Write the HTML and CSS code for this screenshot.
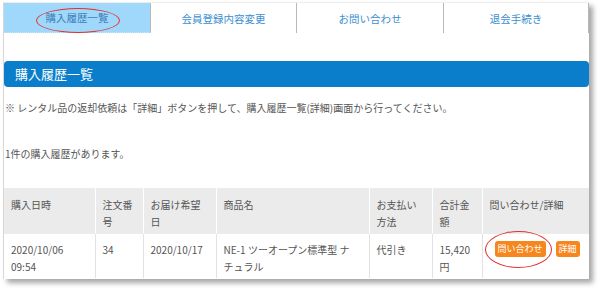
FILE: index.html
```html
<!DOCTYPE html>
<html lang="ja">
<head>
<meta charset="utf-8">
<link rel="stylesheet" href="styles.css">
</head>
<body>
<div class="card">
  <nav class="tabs">
    <a class="tab active">購入履歴一覧</a>
    <a class="tab">会員登録内容変更</a>
    <a class="tab">お問い合わせ</a>
    <a class="tab">退会手続き</a>
    <span class="mark mark-tab"></span>
  </nav>
  <h1 class="title">購入履歴一覧</h1>
  <p class="note">※ レンタル品の返却依頼は「詳細」ボタンを押して、購入履歴一覧(詳細)画面から行ってください。</p>
  <p class="count">1件の購入履歴があります。</p>
  <table class="history">
    <colgroup>
      <col class="c1"><col class="c2"><col class="c3"><col class="c4"><col class="c5"><col class="c6"><col class="c7">
    </colgroup>
    <thead>
      <tr>
        <th>購入日時</th>
        <th>注文番号</th>
        <th>お届け希望日</th>
        <th>商品名</th>
        <th>お支払い方法</th>
        <th>合計金額</th>
        <th>問い合わせ/詳細</th>
      </tr>
    </thead>
    <tbody>
      <tr>
        <td>2020/10/06 09:54</td>
        <td>34</td>
        <td>2020/10/17</td>
        <td class="product">NE-1 ツーオープン標準型 ナチュラル</td>
        <td>代引き</td>
        <td>15,420円</td>
        <td class="actions"><span class="btn">問い合わせ</span><span class="btn">詳細</span><span class="mark mark-btn"></span></td>
      </tr>
    </tbody>
  </table>
</div>
</body>
</html>
```
FILE: styles.css
```css
html, body {
  margin: 0;
  padding: 0;
  background: #fff;
}
body {
  width: 600px;
  height: 290px;
  overflow: hidden;
  font-family: "Noto Sans CJK JP", "Noto Sans", sans-serif;
  color: #555;
  font-size: 10px;
}
.card {
  position: relative;
  margin: 2px 0 0 3px;
  width: 586px;
  height: 277px;
  background: #fff;
  border-left: 1px solid #d8d8d8;
  border-top: 1px solid #eee;
  box-shadow: 4px 4px 5px rgba(0, 0, 0, 0.35);
  box-sizing: border-box;
}
.tabs {
  position: relative;
  display: grid;
  grid-template-columns: 147px 146px 147px 145px;
  height: 30px;
}
.tab {
  display: flex;
  align-items: center;
  justify-content: center;
  color: #3d8fcf;
  font-size: 10.5px;
  border-right: 1px solid #b8b8b8;
}
.tab.active {
  background: #9fd8fb;
  color: #3d7fb8;
  border-bottom: 1px dotted #c8e6f8;
}
.tab:last-child {
  border-right: 1px solid #c8c8c8;
}
.mark {
  position: absolute;
  border: 1.5px solid #e2302c;
  border-radius: 50%;
  box-sizing: border-box;
}
.mark-tab {
  left: 32px;
  top: 5px;
  width: 84px;
  height: 25px;
}
.title {
  margin: 28px 0 0 0;
  height: 26px;
  background: #0a7ecb;
  border-radius: 4px;
  color: #fff;
  font-size: 13px;
  font-weight: normal;
  line-height: 26px;
  padding-left: 11px;
}
.note {
  margin: 12px 0 0 1px;
  line-height: 17px;
}
.count {
  margin: 29px 0 0 1px;
  line-height: 17px;
}
.history {
  margin-top: 26px;
  width: 585px;
  border-collapse: collapse;
  table-layout: fixed;
}
.c1 { width: 91px; }
.c2 { width: 48px; }
.c3 { width: 73px; }
.c4 { width: 153px; }
.c5 { width: 63px; }
.c6 { width: 50px; }
.c7 { width: 107px; }
.history th,
.history td {
  text-align: left;
  vertical-align: top;
  font-weight: normal;
  line-height: 17px;
  padding: 0 7px;
}
.history th {
  background: #ebebeb;
  height: 46px;
  padding-top: 8px;
  padding-bottom: 4px;
  box-sizing: border-box;
  border-left: 1px solid #fff;
}
.history th:first-child { border-left: none; }
.history td {
  height: 44px;
  padding-top: 7px;
  box-sizing: border-box;
  border-left: 1px solid #e2e2e2;
}
.history td:first-child { border-left: none; }
.history td.product {
  padding-right: 16px;
}
.history td.actions {
  position: relative;
  white-space: nowrap;
  padding-top: 7px;
  padding-left: 12px;
  padding-right: 0;
}
.btn {
  display: inline-block;
  vertical-align: top;
  background: #f7861c;
  color: #fff;
  border-radius: 3px;
  font-size: 9px;
  line-height: 16px;
  padding: 0 3px;
  margin-right: 10px;
  margin-top: 0;
}
.mark-btn {
  left: 2px;
  top: -3px;
  width: 67px;
  height: 37px;
}
```
